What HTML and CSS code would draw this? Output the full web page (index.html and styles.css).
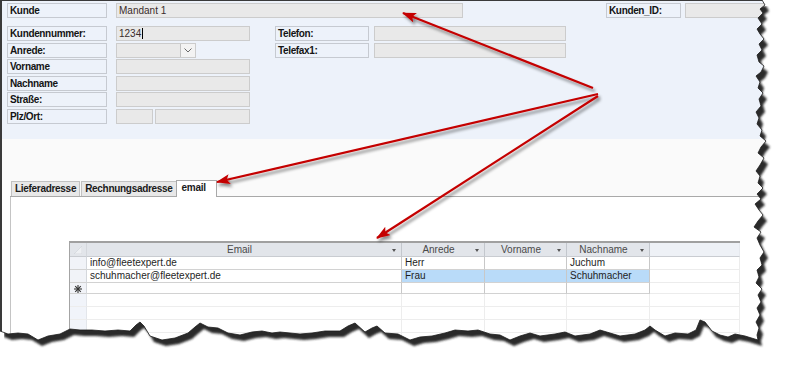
FILE: index.html
```html
<!DOCTYPE html>
<html>
<head>
    <title>Kunde</title>
    <link rel="stylesheet" href="styles.css">
</head>
<body>
<div class="shot">
    <div class="window">
        <div class="form">
            <div class="row top">
                <div class="lbl">Kunde</div>
                <div class="fld w-mandant">Mandant 1</div>
                <div class="lbl w-id">Kunden_ID:</div>
                <div class="fld w-idval"></div>
            </div>
            <div class="cols">
                <div class="col left">
                    <div class="row"><div class="lbl">Kundennummer:</div><div class="fld w-main">1234<span class="caret"></span></div></div>
                    <div class="row"><div class="lbl">Anrede:</div><div class="fld combo"><span class="combo-btn"><svg width="8" height="5" viewBox="0 0 8 5"><polyline points="0.5,0.5 4,4 7.5,0.5" fill="none" stroke="#6a6a6a" stroke-width="1"/></svg></span></div></div>
                    <div class="row"><div class="lbl">Vorname</div><div class="fld w-main"></div></div>
                    <div class="row"><div class="lbl">Nachname</div><div class="fld w-main"></div></div>
                    <div class="row"><div class="lbl">Straße:</div><div class="fld w-main"></div></div>
                    <div class="row"><div class="lbl">Plz/Ort:</div><div class="fld w-plz"></div><div class="fld w-ort"></div></div>
                </div>
                <div class="col right">
                    <div class="row"><div class="lbl w-tel">Telefon:</div><div class="fld w-telval"></div></div>
                    <div class="row"><div class="lbl w-tel">Telefax1:</div><div class="fld w-telval"></div></div>
                </div>
            </div>
        </div>

        <div class="band"></div>

        <div class="tabs">
            <div class="tab">Lieferadresse</div>
            <div class="tab">Rechnungsadresse</div>
            <div class="tab active">email</div>
        </div>

        <div class="tab-panel">
            <table class="grid">
                <colgroup>
                    <col style="width:17px">
                    <col style="width:315px">
                    <col style="width:83px">
                    <col style="width:82px">
                    <col style="width:83px">
                    <col style="width:90px">
                </colgroup>
                <tr class="head">
                    <th class="sel"><svg width="8" height="8" viewBox="0 0 8 8"><polygon points="0,8 8,0 8,8" fill="#eef0f3" stroke="#cdd1d6" stroke-width="0.6"/></svg></th>
                    <th><div class="hd"><span>Email</span><i class="dd"></i></div></th>
                    <th><div class="hd"><span>Anrede</span><i class="dd"></i></div></th>
                    <th><div class="hd"><span>Vorname</span><i class="dd"></i></div></th>
                    <th><div class="hd"><span>Nachname</span><i class="dd"></i></div></th>
                    <th class="blank"></th>
                </tr>
                <tr class="rec">
                    <td class="sel"></td>
                    <td>info@fleetexpert.de</td>
                    <td>Herr</td>
                    <td></td>
                    <td>Juchum</td>
                    <td class="blank"></td>
                </tr>
                <tr class="rec">
                    <td class="sel"></td>
                    <td>schuhmacher@fleetexpert.de</td>
                    <td class="hi">Frau</td>
                    <td class="hi"></td>
                    <td class="hi">Schuhmacher</td>
                    <td class="blank"></td>
                </tr>
                <tr class="rec">
                    <td class="sel"><svg width="8" height="8" viewBox="0 0 8 8"><g stroke="#333" stroke-width="1.1"><line x1="4" y1="0" x2="4" y2="8"/><line x1="0" y1="4" x2="8" y2="4"/><line x1="1.2" y1="1.2" x2="6.8" y2="6.8"/><line x1="6.8" y1="1.2" x2="1.2" y2="6.8"/></g></svg></td>
                    <td></td>
                    <td></td>
                    <td></td>
                    <td></td>
                    <td class="blank"></td>
                </tr>
                <tr class="empty"><td class="sel"></td><td></td><td></td><td></td><td></td><td></td></tr>
                <tr class="empty"><td class="sel"></td><td></td><td></td><td></td><td></td><td></td></tr>
                <tr class="empty"><td class="sel"></td><td></td><td></td><td></td><td></td><td></td></tr>
                <tr class="empty"><td class="sel"></td><td></td><td></td><td></td><td></td><td></td></tr>
            </table>
        </div>
    </div>

    <svg class="overlay" width="799" height="367" viewBox="0 0 799 367">
        <defs>
            <marker id="ah" viewBox="0 0 14 10" refX="13" refY="5" markerWidth="14" markerHeight="10" markerUnits="userSpaceOnUse" orient="auto">
                <path d="M0,0 L14,5 L0,10 L3,5 z" fill="#c40000"/>
            </marker>
            <filter id="ash" filterUnits="userSpaceOnUse" x="0" y="0" width="799" height="367">
                <feDropShadow dx="2" dy="3" stdDeviation="1.5" flood-color="#000" flood-opacity="0.45"/>
            </filter>
            <filter id="blur" filterUnits="userSpaceOnUse" x="0" y="0" width="799" height="367">
                <feGaussianBlur stdDeviation="1.3"/>
            </filter>
            <clipPath id="outside">
                <path clip-rule="evenodd" d="M0,0H799V367H0Z M0,0 L762,0 L765,5 L760,9 L763,13 L758,18 L762,24 L757,29 L760,34 L764,39 L759,44 L762,50 L757,55 L759,62 L764,66 L761,72 L756,76 L760,82 L758,88 L763,93 L759,99 L761,106 L756,112 L759,118 L757,124 L762,130 L760,136 L766,141 L761,147 L758,153 L764,158 L760,165 L756,171 L760,176 L758,183 L763,188 L757,194 L761,199 L755,204 L759,210 L763,215 L758,221 L754,227 L761,232 L757,238 L760,245 L764,252 L760,258 L762,265 L757,270 L759,277 L756,283 L762,289 L758,295 L761,302 L757,308 L760,315 L756,322 L759,328 L757,335 L758,340 L745,336 L735,334 L728,337 L720,335 L712,331 L705,322 L700,320 L696,330 L688,334 L675,333 L665,336 L655,330 L650,326 L645,330 L635,334 L620,336 L610,333 L600,330 L590,334 L575,336 L565,332 L555,334 L540,336 L530,333 L520,336 L510,340 L500,335 L490,334 L478,330 L468,331 L455,330 L445,333 L432,336 L420,337 L410,340 L398,334 L385,333 L377,326 L372,328 L365,332 L355,323 L348,326 L340,331 L325,331 L312,333 L300,334 L290,333 L280,332 L272,333 L262,331 L252,332 L240,335 L228,333 L218,328 L208,327 L200,323 L195,327 L188,333 L175,338 L162,340 L150,336 L144,326 L140,322 L136,325 L130,331 L118,330 L105,331 L92,330 L80,330 L70,329 L60,334 L48,336 L38,340 L28,334 L18,333 L8,334 L0,331 Z"/>
            </clipPath>
        </defs>

        <path fill="#fff" fill-rule="evenodd" d="M0,0H799V367H0Z M0,0 L762,0 L765,5 L760,9 L763,13 L758,18 L762,24 L757,29 L760,34 L764,39 L759,44 L762,50 L757,55 L759,62 L764,66 L761,72 L756,76 L760,82 L758,88 L763,93 L759,99 L761,106 L756,112 L759,118 L757,124 L762,130 L760,136 L766,141 L761,147 L758,153 L764,158 L760,165 L756,171 L760,176 L758,183 L763,188 L757,194 L761,199 L755,204 L759,210 L763,215 L758,221 L754,227 L761,232 L757,238 L760,245 L764,252 L760,258 L762,265 L757,270 L759,277 L756,283 L762,289 L758,295 L761,302 L757,308 L760,315 L756,322 L759,328 L757,335 L758,340 L745,336 L735,334 L728,337 L720,335 L712,331 L705,322 L700,320 L696,330 L688,334 L675,333 L665,336 L655,330 L650,326 L645,330 L635,334 L620,336 L610,333 L600,330 L590,334 L575,336 L565,332 L555,334 L540,336 L530,333 L520,336 L510,340 L500,335 L490,334 L478,330 L468,331 L455,330 L445,333 L432,336 L420,337 L410,340 L398,334 L385,333 L377,326 L372,328 L365,332 L355,323 L348,326 L340,331 L325,331 L312,333 L300,334 L290,333 L280,332 L272,333 L262,331 L252,332 L240,335 L228,333 L218,328 L208,327 L200,323 L195,327 L188,333 L175,338 L162,340 L150,336 L144,326 L140,322 L136,325 L130,331 L118,330 L105,331 L92,330 L80,330 L70,329 L60,334 L48,336 L38,340 L28,334 L18,333 L8,334 L0,331 Z"/>

        <g clip-path="url(#outside)">
            <path transform="translate(4,6)" fill="#2c2c2c" filter="url(#blur)" d="M0,0 L762,0 L765,5 L760,9 L763,13 L758,18 L762,24 L757,29 L760,34 L764,39 L759,44 L762,50 L757,55 L759,62 L764,66 L761,72 L756,76 L760,82 L758,88 L763,93 L759,99 L761,106 L756,112 L759,118 L757,124 L762,130 L760,136 L766,141 L761,147 L758,153 L764,158 L760,165 L756,171 L760,176 L758,183 L763,188 L757,194 L761,199 L755,204 L759,210 L763,215 L758,221 L754,227 L761,232 L757,238 L760,245 L764,252 L760,258 L762,265 L757,270 L759,277 L756,283 L762,289 L758,295 L761,302 L757,308 L760,315 L756,322 L759,328 L757,335 L758,340 L745,336 L735,334 L728,337 L720,335 L712,331 L705,322 L700,320 L696,330 L688,334 L675,333 L665,336 L655,330 L650,326 L645,330 L635,334 L620,336 L610,333 L600,330 L590,334 L575,336 L565,332 L555,334 L540,336 L530,333 L520,336 L510,340 L500,335 L490,334 L478,330 L468,331 L455,330 L445,333 L432,336 L420,337 L410,340 L398,334 L385,333 L377,326 L372,328 L365,332 L355,323 L348,326 L340,331 L325,331 L312,333 L300,334 L290,333 L280,332 L272,333 L262,331 L252,332 L240,335 L228,333 L218,328 L208,327 L200,323 L195,327 L188,333 L175,338 L162,340 L150,336 L144,326 L140,322 L136,325 L130,331 L118,330 L105,331 L92,330 L80,330 L70,329 L60,334 L48,336 L38,340 L28,334 L18,333 L8,334 L0,331 Z"/>
        </g>

        <polyline fill="none" stroke="#1c1c1c" stroke-width="0.8" points="762,0 765,5 760,9 763,13 758,18 762,24 757,29 760,34 764,39 759,44 762,50 757,55 759,62 764,66 761,72 756,76 760,82 758,88 763,93 759,99 761,106 756,112 759,118 757,124 762,130 760,136 766,141 761,147 758,153 764,158 760,165 756,171 760,176 758,183 763,188 757,194 761,199 755,204 759,210 763,215 758,221 754,227 761,232 757,238 760,245 764,252 760,258 762,265 757,270 759,277 756,283 762,289 758,295 761,302 757,308 760,315 756,322 759,328 757,335 758,340 745,336 735,334 728,337 720,335 712,331 705,322 700,320 696,330 688,334 675,333 665,336 655,330 650,326 645,330 635,334 620,336 610,333 600,330 590,334 575,336 565,332 555,334 540,336 530,333 520,336 510,340 500,335 490,334 478,330 468,331 455,330 445,333 432,336 420,337 410,340 398,334 385,333 377,326 372,328 365,332 355,323 348,326 340,331 325,331 312,333 300,334 290,333 280,332 272,333 262,331 252,332 240,335 228,333 218,328 208,327 200,323 195,327 188,333 175,338 162,340 150,336 144,326 140,322 136,325 130,331 118,330 105,331 92,330 80,330 70,329 60,334 48,336 38,340 28,334 18,333 8,334 0,331"/>

        <g filter="url(#ash)" stroke="#c40000" stroke-width="2.2" fill="none">
            <line x1="593" y1="88" x2="403" y2="13" marker-end="url(#ah)"/>
            <line x1="598" y1="94" x2="217" y2="182" marker-end="url(#ah)"/>
            <line x1="598" y1="96" x2="377" y2="238" marker-end="url(#ah)"/>
        </g>
    </svg>
</div>
</body>
</html>
```

FILE: styles.css
```css
body {
    margin: 0;
    background-color: #fff;
    font-family: "Liberation Sans", Arial, sans-serif;
}

.shot {
    position: relative;
    width: 799px;
    height: 367px;
    overflow: hidden;
    background-color: #fff;
}

.window {
    height: 100%;
    box-sizing: border-box;
    border-top: 1px solid #3a3a3a;
    border-left: 2px solid #3a3a3a;
    background-color: #fff;
}

/* form header */

.form {
    height: 138px;
    box-sizing: border-box;
    padding: 2px 0 0 5px;
    background-color: #edf2fa;
}

.row {
    display: flex;
    height: 15px;
    margin-bottom: 1.5px;
}

.row.top {
    margin-bottom: 8px;
}

.lbl {
    box-sizing: border-box;
    width: 100px;
    height: 15px;
    padding: 0 0 0 2px;
    border: 1px solid #c6cad1;
    font-size: 10px;
    font-weight: bold;
    letter-spacing: -0.35px;
    line-height: 13px;
    color: #141414;
    white-space: nowrap;
}

.fld {
    box-sizing: border-box;
    height: 15px;
    margin-left: 9px;
    padding-left: 2px;
    border: 1px solid #cccccc;
    background-color: #e9e9e9;
    font-size: 10px;
    line-height: 13px;
    color: #3a2c2c;
}

.w-mandant { width: 347px; }
.w-id { width: 75px; margin-left: 143px; }
.w-idval { width: 100px; margin-left: 4px; }
.w-main { width: 134px; }
.w-plz { width: 37px; }
.w-ort { width: 95px; margin-left: 2px; }
.w-tel { width: 94px; }
.w-telval { width: 192px; margin-left: 5px; }

.caret {
    display: inline-block;
    width: 1px;
    height: 11px;
    margin-left: 1px;
    vertical-align: -2px;
    background-color: #000;
}

.combo {
    width: 80px;
    padding: 0;
    display: flex;
    justify-content: flex-end;
}

.combo-btn {
    width: 14px;
    border-left: 1px solid #c2c2c2;
    background-color: #f3f3f3;
    display: flex;
    align-items: center;
    justify-content: center;
}

.cols {
    display: flex;
}

.col.left {
    width: 243px;
}

.col.right {
    margin-left: 25px;
}

/* tabs */

.band {
    height: 41px;
    background-color: #fafafa;
}

.tabs {
    display: flex;
    align-items: flex-end;
    height: 16px;
    margin-left: 8px;
    padding-left: 1px;
    border-bottom: 1px solid #a9a9a9;
    background-color: #fafafa;
}

.tab {
    box-sizing: border-box;
    height: 15px;
    padding: 0 3px;
    border: 1px solid #c2c2c2;
    border-bottom: none;
    margin-right: 1px;
    background-color: #e8e8e8;
    font-size: 10px;
    font-weight: bold;
    letter-spacing: -0.3px;
    line-height: 14px;
    color: #1a1a1a;
}

.tab.active {
    height: 17px;
    margin-bottom: -1px;
    margin-left: -2px;
    padding: 0 10px 0 5px;
    border-color: #a9a9a9;
    background-color: #fff;
    line-height: 13px;
}

.tab-panel {
    margin-left: 8px;
    padding: 44px 0 0 58px;
    border-left: 1px solid #c4c4c4;
    height: 200px;
}

/* datasheet */

.grid {
    width: 671px;
    table-layout: fixed;
    border-collapse: separate;
    border-spacing: 0;
    border-left: 1px solid #a4a4a4;
    border-top: 2px solid #a0a0a0;
    font-size: 10px;
    color: #1e1e1e;
}

.grid th,
.grid td {
    padding: 0 0 0 3px;
    border-right: 1px solid #c8c8c8;
    border-bottom: 1px solid #d2d2d2;
    line-height: 12px;
    white-space: nowrap;
    overflow: hidden;
}

.grid th {
    line-height: 13px;
    padding: 0;
    background-color: #e2e5ea;
    border-right-color: #c3c7cd;
    border-bottom-color: #c9ccd1;
    font-weight: normal;
    color: #4a4a4a;
}

.hd {
    display: flex;
    align-items: center;
}

.hd span {
    flex: 1;
    text-align: center;
}

.dd {
    width: 0;
    height: 0;
    margin: 2px 5px 0 0;
    border-left: 2.5px solid transparent;
    border-right: 2.5px solid transparent;
    border-top: 3px solid #555;
}

.grid .sel {
    padding: 0;
    text-align: center;
    background-color: #f1f3f8;
    border-right-color: #d4d7dc;
}

.grid th.sel {
    background-color: #e2e5ea;
    vertical-align: bottom;
}

.grid th.sel svg {
    display: block;
    margin: 0 0 2px 4px;
}

.grid td.sel svg {
    display: block;
    margin: 2px auto 0;
}

.grid th.blank {
    background-color: #eef1f6;
    border-right-color: #e6e9ee;
}

.grid td.blank {
    border-right-color: #ececec;
    border-bottom-color: #ececec;
}

.grid td.hi {
    background-color: #b9dbf9;
}

.grid .empty td {
    height: 12px;
    border-right-color: #ededed;
    border-bottom-color: #ededed;
}

.grid .empty td.sel {
    background-color: #f1f4fa;
    border-right-color: #e3e6eb;
}

.overlay {
    position: absolute;
    left: 0;
    top: 0;
    pointer-events: none;
}
```
